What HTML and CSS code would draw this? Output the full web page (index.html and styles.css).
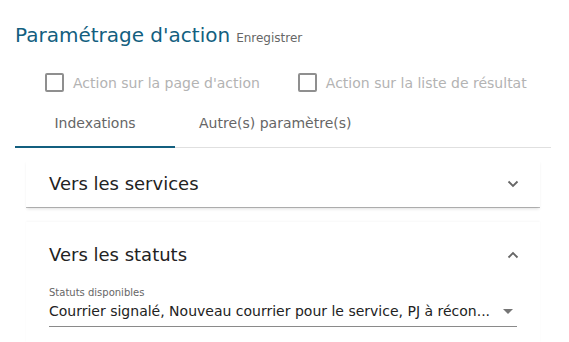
FILE: index.html
```html
<!DOCTYPE html>
<html lang="fr">
<head>
    <meta charset="UTF-8">
    <meta name="viewport" content="width=device-width, initial-scale=1.0">
    <title>Paramétrage d'action</title>
    <link rel="stylesheet" href="styles.css">
</head>
<body>
    <div class="page">
        <div class="title-row">
            <h1>Paramétrage d'action</h1>
            <span class="save">Enregistrer</span>
        </div>
        <div class="checks">
            <label class="check"><span class="box"></span>Action sur la page d'action</label>
            <label class="check"><span class="box"></span>Action sur la liste de résultat</label>
        </div>
        <div class="tabs">
            <div class="tab active">Indexations</div>
            <div class="tab">Autre(s) paramètre(s)</div>
        </div>
        <div class="tab-body">
            <div class="panel">
                <div class="panel-head">
                    <span>Vers les services</span>
                    <svg class="chev" width="12" height="8" viewBox="0 0 12 8"><path d="M1.5 1.5 L6 6 L10.5 1.5" fill="none" stroke="#666" stroke-width="1.8"/></svg>
                </div>
            </div>
            <div class="panel open">
                <div class="panel-head">
                    <span>Vers les statuts</span>
                    <svg class="chev" width="12" height="8" viewBox="0 0 12 8"><path d="M1.5 6.5 L6 2 L10.5 6.5" fill="none" stroke="#666" stroke-width="1.8"/></svg>
                </div>
                <div class="panel-body">
                    <div class="field">
                        <div class="field-label">Statuts disponibles</div>
                        <div class="field-value">
                            <span class="value-text">Courrier signalé, Nouveau courrier pour le service, PJ à récon...</span>
                            <span class="arrow"></span>
                        </div>
                    </div>
                </div>
            </div>
        </div>
    </div>
</body>
</html>
```

FILE: styles.css
```css
body {
    margin: 0;
    font-family: "DejaVu Sans", sans-serif;
    background: #fff;
    color: #222;
}
.page {
    padding: 23px 18px 0 15px;
}
.title-row {
    display: flex;
    align-items: baseline;
    gap: 6px;
}
h1 {
    margin: 0;
    font-size: 20px;
    font-weight: normal;
    color: #135f7f;
}
.save {
    font-size: 12px;
    color: #666;
}
.checks {
    display: flex;
    gap: 38px;
    padding: 26px 0 0 30px;
}
.check {
    display: flex;
    align-items: center;
    font-size: 14px;
    color: #b3b3b3;
}
.box {
    width: 15px;
    height: 15px;
    border: 2px solid #8f8f8f;
    border-radius: 2px;
    margin-right: 9px;
}
.tabs {
    display: flex;
    margin-top: 8px;
    border-bottom: 1px solid #e0e0e0;
}
.tab {
    min-width: 160px;
    padding: 0 24px;
    box-sizing: border-box;
    height: 48px;
    display: flex;
    align-items: center;
    justify-content: center;
    font-size: 14px;
    color: #666;
    border-bottom: 2px solid transparent;
    margin-bottom: -1px;
}
.tab.active {
    border-bottom-color: #135f7f;
}
.tab-body {
    padding: 11px 11px 0;
}
.panel {
    background: #fff;
    box-shadow: 0 1px 0 0 rgba(0,0,0,.25), 0 3px 3px -1px rgba(0,0,0,.12);
}
.panel-head {
    height: 48px;
    padding: 0 21px 0 23px;
    display: flex;
    align-items: center;
    justify-content: space-between;
    font-size: 18px;
    color: #222;
}
.panel.open {
    margin-top: 15px;
    box-shadow: 0 -1px 2px 0 rgba(0,0,0,.03);
}
.panel.open .panel-head {
    height: 64px;
}
.chev {
    margin-top: 2px;
}
.panel-body {
    padding: 1px 23px 16px 23px;
}
.field {
    width: 468px;
}
.field-label {
    font-size: 10px;
    color: #666;
}
.field-value {
    display: flex;
    align-items: center;
    padding: 5px 0 7px;
    border-bottom: 1px solid #8a8a8a;
    font-size: 14px;
    color: #222;
}
.value-text {
    flex: 1;
    white-space: nowrap;
}
.arrow {
    width: 0;
    height: 0;
    border-left: 5px solid transparent;
    border-right: 5px solid transparent;
    border-top: 5px solid #757575;
    margin: 0 4px 0 8px;
}
```
